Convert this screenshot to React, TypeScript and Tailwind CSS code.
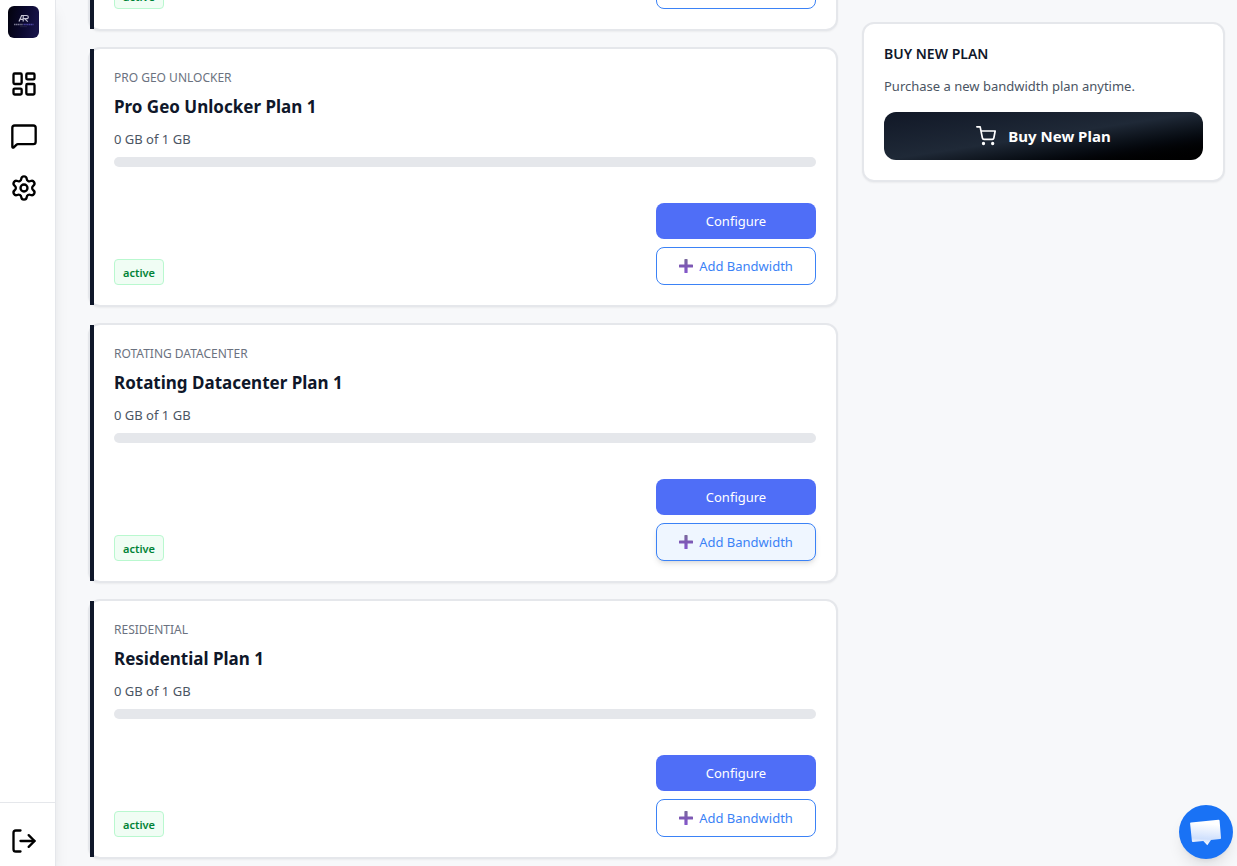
import { LayoutDashboard, LogOut, MessageSquare, Settings } from "lucide-react";
import { FiShoppingCart } from "react-icons/fi";
import clsx from "clsx";

type PlanDetails = { category: string; name: string; used: number; total: number };
type Plan = { id: number; details?: PlanDetails; highlighted?: boolean };

const plans: Plan[] = [
  { id: 1 },
  { id: 2, details: { category: "Pro Geo Unlocker", name: "Pro Geo Unlocker Plan 1", used: 0, total: 1 } },
  { id: 3, details: { category: "Rotating Datacenter", name: "Rotating Datacenter Plan 1", used: 0, total: 1 }, highlighted: true },
  { id: 4, details: { category: "Residential", name: "Residential Plan 1", used: 0, total: 1 } },
];

function Logo() {
  return (
    <svg viewBox="0 0 31 32" className="h-8 w-[31px]" aria-hidden="true">
      <defs>
        <linearGradient id="logo-bg" x1="0" y1="0" x2="1" y2="0.2">
          <stop offset="0" stopColor="#02020c" />
          <stop offset="0.6" stopColor="#0b0930" />
          <stop offset="1" stopColor="#171347" />
        </linearGradient>
      </defs>
      <rect width="31" height="32" rx="6" fill="url(#logo-bg)" />
      <path d="M11 15.5 13.600 9.500H18.500q1.800 0 1.800 1.600T18.500 12.700h-2l3.300 2.900M15.200 9.600v5.900M12.600 13.400h2.600" fill="none" stroke="#c4c4d4" strokeWidth="1.2" />
      <path d="M6 18.500h9" stroke="#77778f" strokeWidth="1.3" strokeDasharray="1.400 .4" />
      <path d="M15.500 18.500H25.500" stroke="#4b45a0" strokeWidth="1.3" strokeDasharray="1.400 .4" />
      <path d="M12 20.700h7" stroke="#30304f" strokeWidth=".6" />
    </svg>
  );
}

function PlusIcon() {
  return (
    <svg viewBox="0 0 14 14" className="size-3.5" aria-hidden="true">
      <defs>
        <linearGradient id="plus-fill" x1="0" y1="0" x2="0" y2="1">
          <stop offset="0" stopColor="#7a6a9c" />
          <stop offset="0.5" stopColor="#7d58b5" />
          <stop offset="1" stopColor="#8458cc" />
        </linearGradient>
      </defs>
      <path d="M5.4.6q0-.6.6-.6h2q.6 0 .6.600v4.800h4.800q.6 0 .6.600v2q0 .6-.6.600H8.600v4.800q0 .6-.6.600H6q-.6 0-.6-.6V8.600H.6Q0 8.600 0 8V6q0-.6.6-.6h4.800z" fill="url(#plus-fill)" />
    </svg>
  );
}

function Sidebar() {
  const iconButton = "flex size-7 items-center justify-center text-black";
  return (
    <aside className="z-10 flex w-14 shrink-0 flex-col border-r border-gray-200 bg-white shadow-lg">
      <a href="#home" aria-label="Home" className="ml-2 mt-1.5">
        <Logo />
      </a>
      <nav className="ml-2.5 mt-8 flex flex-col gap-6">
        <a href="#dashboard" aria-label="Dashboard" className={iconButton}><LayoutDashboard size={28} /></a>
        <a href="#messages" aria-label="Messages" className={iconButton}><MessageSquare size={28} /></a>
        <a href="#settings" aria-label="Settings" className={iconButton}><Settings size={28} /></a>
      </nav>
      <div className="mt-auto border-t border-gray-200 pb-[11px] pl-2.5 pt-6">
        <button type="button" aria-label="Log out" className={iconButton}><LogOut size={28} /></button>
      </div>
    </aside>
  );
}

function PlanUsage({ category, name, used, total }: PlanDetails) {
  return (
    <div className="mb-9">
      <p className="pt-px text-xs leading-[15px] uppercase text-[#6b7280]">{category}</p>
      <h2 className="mt-2 text-[17px] font-bold leading-7 text-[#0f172a]">{name}</h2>
      <p className="mt-2 text-[13px] leading-5 text-[#4b5563]">{used} GB of {total} GB</p>
      <div className="mt-2 h-2.5 overflow-hidden rounded-full bg-gray-200">
        <div className="h-full bg-[#4f6ef7]" style={{ width: `${(used / total) * 100}%` }} />
      </div>
    </div>
  );
}

function PlanCard({ plan }: { plan: Plan }) {
  return (
    <article className="shrink-0 rounded-xl border-2 border-gray-200 bg-white shadow-xs">
      <div className="border-l-4 border-[#0f172a] p-5">
        {plan.details && <PlanUsage {...plan.details} />}
        <div className="flex h-[82px] items-end justify-between">
          <span className="rounded border border-green-200 bg-green-50 px-2 pb-[3px] pt-[5px] text-[11px] font-semibold leading-4 text-green-700">active</span>
          <div className="flex w-40 flex-col gap-2">
            <button type="button" className="h-9 rounded-lg bg-[#4f6ef7] pt-0.5 text-[13px] text-white">Configure</button>
            <button
              type="button"
              className={clsx(
                "flex h-[38px] items-center justify-center gap-1.5 rounded-lg border border-[#3b82f6] text-[13px] text-[#3b82f6]",
                plan.highlighted ? "bg-blue-50 shadow-md" : "bg-white",
              )}
            >
              <PlusIcon />
              <span className="pt-0.5">Add Bandwidth</span>
            </button>
          </div>
        </div>
      </div>
    </article>
  );
}

function ChatButton() {
  return (
    <button type="button" aria-label="Open chat" className="fixed bottom-[7px] right-1 z-20 size-[54px] rounded-full bg-[#1972f5] shadow-lg">
      <svg viewBox="0 0 54 54" className="size-full" aria-hidden="true">
        <defs>
          <linearGradient id="chat-fill" x1="0.55" y1="0" x2="0.45" y2="1">
            <stop offset="0.15" stopColor="#fff" />
            <stop offset="0.75" stopColor="#cfe0fd" />
            <stop offset="1" stopColor="#fff" />
          </linearGradient>
        </defs>
        <path d="M12 17.500 39.500 14.800q1-.1 1.100.9L42 32.900q.1 1-.9 1.100L32 35l-3.700 5.300-4-4.300L14 36.900q-1 .1-1.100-.9L11.100 18.600q-.1-1 .9-1.100z" fill="url(#chat-fill)" />
      </svg>
    </button>
  );
}

export default function App() {
  return (
    <div className="flex h-screen overflow-hidden bg-[#f7f8fa] font-['Noto_Sans','Open_Sans',sans-serif]">
      <Sidebar />
      <main className="flex min-w-0 flex-1 gap-6 pl-8 pr-3">
        <section aria-label="Plans" className="flex min-w-0 flex-1 flex-col justify-end gap-4 pb-[7px]">
          {plans.map((plan) => (
            <PlanCard key={plan.id} plan={plan} />
          ))}
        </section>
        <aside className="w-[363px] shrink-0 pt-[22px]">
          <div className="rounded-xl border-2 border-gray-200 bg-white p-5 shadow-xs">
            <h2 className="text-sm font-semibold uppercase text-[#0f172a]">Buy New Plan</h2>
            <p className="mt-3 text-[13px] leading-5 text-[#4b5563]">Purchase a new bandwidth plan anytime.</p>
            <button type="button" className="mt-4 flex h-12 w-full items-center justify-center gap-3 rounded-xl bg-linear-to-br from-[#111827] via-[#1f2937] to-black text-[15px] font-bold text-white">
              <FiShoppingCart size={20} />
              Buy New Plan
            </button>
          </div>
        </aside>
      </main>
      <ChatButton />
    </div>
  );
}
